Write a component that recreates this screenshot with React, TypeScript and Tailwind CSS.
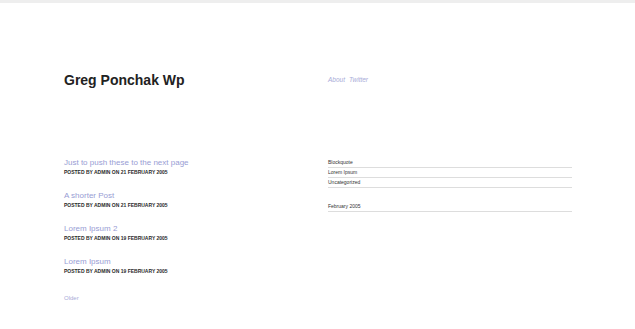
import React from 'react';

const posts = [
    { title: 'Just to push these to the next page', date: '21 February 2005' },
    { title: 'A shorter Post', date: '21 February 2005' },
    { title: 'Lorem Ipsum 2', date: '19 February 2005' },
    { title: 'Lorem Ipsum', date: '19 February 2005' },
];

const App: React.FC = () => {
    return (
        <div className="min-h-[329px] bg-white font-['Liberation_Sans',Arial,sans-serif]">
            <div className="h-[3px] bg-[#eeeeee]" />
            <div className="ml-[64px] w-[508px]">
                <div className="grid grid-cols-[264px_244px] pt-[67px]">
                    <h1 className="text-[14px] leading-[20px] font-bold text-[#222222]">Greg Ponchak Wp</h1>
                    <div className="flex gap-[4px] pt-[6px] text-[6.5px] leading-[8px] italic text-[#a9acd8]">
                        <a href="#">About</a>
                        <a href="#">Twitter</a>
                    </div>
                </div>
                <div className="grid grid-cols-[264px_244px] pt-[68px]">
                    <div className="flex flex-col">
                        {posts.map((p) => (
                            <div key={p.title} className="mb-[16px]">
                                <h2 className="text-[8px] leading-[10px] text-[#989dd4]">{p.title}</h2>
                                <p className="mt-[1px] text-[5px] leading-[6px] font-bold uppercase text-[#2a2a2a]">
                                    Posted by admin on {p.date}
                                </p>
                            </div>
                        ))}
                        <a href="#" className="mt-[5px] text-[6px] leading-[6px] text-[#a9acd8]">Older</a>
                    </div>
                    <div className="flex flex-col">
                        <ul className="text-[5px] leading-[7px] text-[#333333]">
                            {['Blockquote', 'Lorem Ipsum', 'Uncategorized'].map((c) => (
                                <li key={c} className="pt-[1px] pb-[1px] border-b border-[#dddddd]">{c}</li>
                            ))}
                        </ul>
                        <ul className="mt-[14px] text-[5px] leading-[7px] text-[#333333]">
                            <li className="pt-[1px] pb-[1px] border-b border-[#dddddd]">February 2005</li>
                        </ul>
                    </div>
                </div>
            </div>
        </div>
    );
};

export default App;
